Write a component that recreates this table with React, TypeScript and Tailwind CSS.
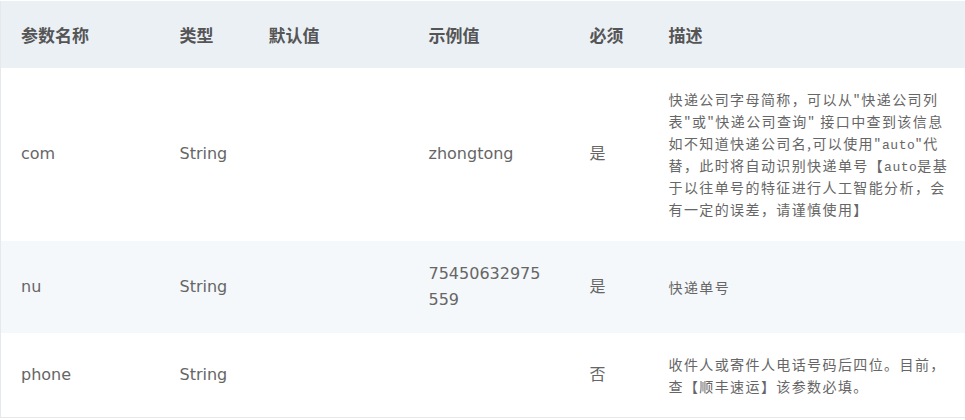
import React from "react";

const body = "font-['DejaVu_Sans','Noto_Sans_CJK_SC',sans-serif]";
const desc = "font-['Noto_Sans_CJK_SC',sans-serif] text-[14px] leading-[22px] tracking-[1.4px] text-[#666]";

function Auto() {
  return <span className="font-['Liberation_Mono',monospace] text-[13px] leading-[10px] tracking-[0.5px]">auto</span>;
}

export default function App() {
  const th = "text-left font-bold text-[17px] text-[#555] px-5 align-middle";
  const td = `px-5 py-5 align-middle text-[16px] leading-[26px] text-[#666] ${body}`;
  return (
    <div className="w-[965px] h-[420px] bg-white overflow-hidden">
      <table className="table-fixed border-collapse w-[1000px] border-l border-[#e6e8eb] font-['Noto_Sans_CJK_SC',sans-serif]">
        <colgroup>
          <col className="w-[159px]" />
          <col className="w-[89px]" />
          <col className="w-[160px]" />
          <col className="w-[161px]" />
          <col className="w-[79px]" />
          <col />
        </colgroup>
        <thead>
          <tr className="h-[67px] bg-[#ebf0f5] border-t border-white">
            <th className={th}>参数名称</th>
            <th className={th}>类型</th>
            <th className={th}>默认值</th>
            <th className={th}>示例值</th>
            <th className={th}>必须</th>
            <th className={th}>描述</th>
          </tr>
        </thead>
        <tbody>
          <tr className="bg-white h-[173px]">
            <td className={td}>com</td>
            <td className={td}>String</td>
            <td className={td}></td>
            <td className={td}>zhongtong</td>
            <td className={td}>是</td>
            <td className="px-5 py-5 align-middle">
              <div className={desc}>
                <div className="whitespace-nowrap h-[22px]">快递公司字母简称，可以从"快递公司列</div>
                <div className="whitespace-nowrap h-[22px]">表"或"快递公司查询" 接口中查到该信息</div>
                <div className="whitespace-nowrap h-[22px]">如不知道快递公司名,可以使用"<Auto />"代</div>
                <div className="whitespace-nowrap h-[22px]">替，此时将自动识别快递单号【<Auto />是基</div>
                <div className="whitespace-nowrap h-[22px]">于以往单号的特征进行人工智能分析，会</div>
                <div className="whitespace-nowrap h-[22px]">有一定的误差，请谨慎使用】</div>
              </div>
            </td>
          </tr>
          <tr className="bg-[#f5f8fb] h-[92px]">
            <td className={td}>nu</td>
            <td className={td}>String</td>
            <td className={td}></td>
            <td className={`${td} break-all`}>75450632975559</td>
            <td className={td}>是</td>
            <td className="px-5 py-5 align-middle">
              <div className={desc}>快递单号</div>
            </td>
          </tr>
          <tr className="bg-white h-[84px] border-b border-[#e6e8eb]">
            <td className={td}>phone</td>
            <td className={td}>String</td>
            <td className={td}></td>
            <td className={td}></td>
            <td className={td}>否</td>
            <td className="px-5 py-5 align-middle">
              <div className={desc}>
                <div className="whitespace-nowrap h-[22px]">收件人或寄件人电话号码后四位。目前，</div>
                <div className="whitespace-nowrap h-[22px]">查【顺丰速运】该参数必填。</div>
              </div>
            </td>
          </tr>
        </tbody>
      </table>
    </div>
  );
}
